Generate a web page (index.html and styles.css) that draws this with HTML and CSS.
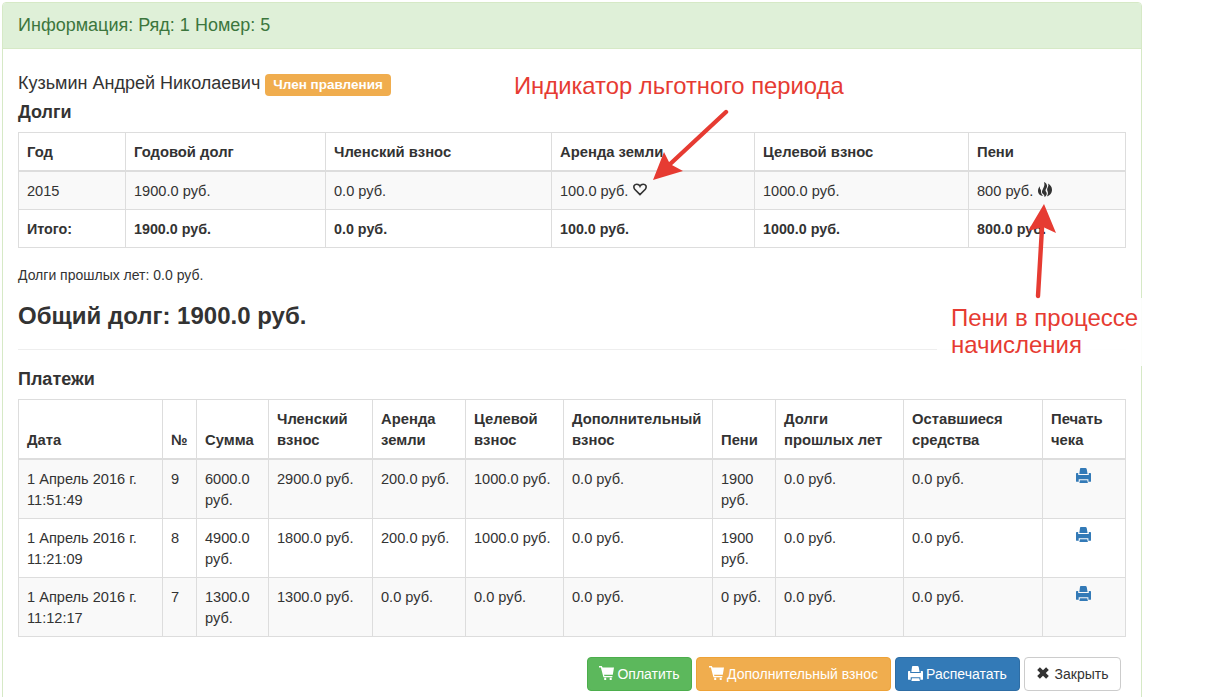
FILE: index.html
```html
<!DOCTYPE html>
<html lang="ru">
<head>
<meta charset="utf-8">
<title>Информация</title>
<link rel="stylesheet" href="styles.css">
</head>
<body>
<svg class="defs" width="0" height="0">
  <symbol id="cart" viewBox="0 0 15 14"><path d="M0 0h2.800l.8 1.500H15l-1.200 7.300H5l.4 1.100h8v1.400H4.400L1.900 1.400H0zM5.200 11.800h2V14h-2zM10.700 11.800h2V14h-2z"/></symbol>
  <symbol id="print" viewBox="0 0 15 15"><path d="M4.700 0h4.800c.6 0 1 .4 1.200 1l.9 4.900H3.300L4 1C4.100.4 4.300 0 4.700 0zM0 5.600C0 5.200.4 5 .8 5h1.400v2h10.600V5h1.400c.4 0 .8.200.8.600v7.600c0 .4-.3.600-.7.600h-1.900v-2.500H2.700v2.500H.7c-.4 0-.7-.2-.7-.6zM3.900 12.300h7.400l.6 2.700H3.400z"/></symbol>
  <symbol id="cross" viewBox="0 0 12 12"><path d="M2.900.2 6 3.200 9.100.2l2.700 2.700L8.800 6l3 3.100-2.700 2.700L6 8.800l-3.100 3L.2 9.100 3.200 6l-3-3.100z"/></symbol>
</svg>
<section class="panel">
  <header class="panel-heading">Информация: Ряд: 1 Номер: 5</header>
  <div class="panel-body">
    <h4 class="owner"><span class="owner-name">Кузьмин Андрей Николаевич</span><span class="label">Член правления</span></h4>
    <h4 class="title">Долги</h4>
    <table class="table debts">
      <colgroup><col class="w107"><col class="w200"><col class="w226"><col class="w203"><col class="w214"><col class="w157"></colgroup>
      <thead><tr><th>Год</th><th>Годовой долг</th><th>Членский взнос</th><th>Аренда земли</th><th>Целевой взнос</th><th>Пени</th></tr></thead>
      <tbody>
        <tr class="odd"><td>2015</td><td>1900.0 руб.</td><td>0.0 руб.</td><td>100.0 руб. <svg class="heart" viewBox="0 0 14 13"><path d="M7 11.600 1.700 6.200C-.2 3.600 1.400 1.200 3.800 1.200 5.400 1.200 6.500 2 7 3.200 7.500 2 8.600 1.200 10.200 1.200c2.400 0 4 2.400 2.100 5z"/></svg></td><td>1000.0 руб.</td><td>800 руб. <svg class="fire" viewBox="0 0 14 15"><path d="M6 0c3.400 1.700 3.800 4.400 2 7-.8 1.300-.6 2.100.4 3.200.9 1.900 0 3.700-2 4.800.2-1.300-.1-2-1-2.700-1.700-1.200-1.900-2.900-.7-4.800C6.100 5 6.900 2.800 6 0zM2 4.200c-.4 1.700 0 2.800 1 3.900-.2 2.500.5 4.300 2.200 6C1.600 13.700-.1 11.400 0 8.800c.1-1.900.7-3.400 2-4.600zM10 1.600c3 1.600 4.400 4.300 3.900 7.500-.4 2.500-2 4.500-5 5.400 1.100-1.800 1.300-3.400.7-5.200-.7-1.500-.6-2.600.1-3.900.8-1.200.9-2.400.3-3.800z"/></svg></td></tr>
        <tr class="total"><td>Итого:</td><td>1900.0 руб.</td><td>0.0 руб.</td><td>100.0 руб.</td><td>1000.0 руб.</td><td>800.0 руб.</td></tr>
      </tbody>
    </table>
    <p class="past">Долги прошлых лет: 0.0 руб.</p>
    <h3 class="sum">Общий долг: 1900.0 руб.</h3>
    <hr class="rule">
    <h4 class="title pays-title">Платежи</h4>
    <table class="table pays">
      <colgroup><col class="w144"><col class="w34"><col class="w72"><col class="w104"><col class="w93"><col class="w98"><col class="w149"><col class="w63"><col class="w128"><col class="w139"><col class="w83"></colgroup>
      <thead><tr><th>Дата</th><th>№</th><th>Сумма</th><th>Членский<br>взнос</th><th>Аренда<br>земли</th><th>Целевой<br>взнос</th><th>Дополнительный<br>взнос</th><th>Пени</th><th>Долги<br>прошлых лет</th><th>Оставшиеся<br>средства</th><th>Печать<br>чека</th></tr></thead>
      <tbody>
        <tr class="odd"><td>1 Апрель 2016 г.<br>11:51:49</td><td>9</td><td>6000.0<br>руб.</td><td>2900.0 руб.</td><td>200.0 руб.</td><td>1000.0 руб.</td><td>0.0 руб.</td><td>1900<br>руб.</td><td>0.0 руб.</td><td>0.0 руб.</td><td class="check"><svg class="print"><use href="#print"/></svg></td></tr>
        <tr><td>1 Апрель 2016 г.<br>11:21:09</td><td>8</td><td>4900.0<br>руб.</td><td>1800.0 руб.</td><td>200.0 руб.</td><td>1000.0 руб.</td><td>0.0 руб.</td><td>1900<br>руб.</td><td>0.0 руб.</td><td>0.0 руб.</td><td class="check"><svg class="print"><use href="#print"/></svg></td></tr>
        <tr class="odd"><td>1 Апрель 2016 г.<br>11:12:17</td><td>7</td><td>1300.0<br>руб.</td><td>1300.0 руб.</td><td>0.0 руб.</td><td>0.0 руб.</td><td>0.0 руб.</td><td>0 руб.</td><td>0.0 руб.</td><td>0.0 руб.</td><td class="check"><svg class="print"><use href="#print"/></svg></td></tr>
      </tbody>
    </table>
    <div class="actions">
      <button class="btn success"><svg class="cart"><use href="#cart"/></svg>Оплатить</button>
      <button class="btn warning"><svg class="cart"><use href="#cart"/></svg>Дополнительный взнос</button>
      <button class="btn primary"><svg class="print"><use href="#print"/></svg>Распечатать</button>
      <button class="btn default"><svg class="cross"><use href="#cross"/></svg>Закрыть</button>
    </div>
  </div>
</section>
<div class="note note-grace">Индикатор льготного периода</div>
<div class="note note-fine">Пени в процессе<br>начисления</div>
<svg class="arrows" viewBox="0 0 1207 697">
  <path class="shaft" d="M726 112 668 166M1038 296 1042 228"/>
  <path class="head" d="M653 180 664 152 670 164 683 171zM1044 204 1056 233 1043 227 1028 231z"/>
</svg>
</body>
</html>
```

FILE: styles.css
```css
* { box-sizing: border-box; }
body {
  margin: 0;
  height: 697px;
  overflow: hidden;
  position: relative;
  background: #fff;
  color: #333;
  font-family: "Liberation Sans", Arial, sans-serif;
  font-size: 15px;
  line-height: 21px;
}
.defs { position: absolute; }
.panel {
  width: 1140px;
  height: 720px;
  margin: 2px 0 0 2px;
  border: 1px solid #d6e9c6;
  border-radius: 4px;
}
.panel-heading {
  height: 46px;
  padding: 12px 15px 0;
  border-bottom: 1px solid #d6e9c6;
  border-radius: 3px 3px 0 0;
  background: #dff0d8;
  color: #3c763d;
  font-size: 18px;
}
.panel-body { padding: 22px 15px 0; }
h3, h4, p { margin: 0; }
.owner {
  display: flex;
  align-items: center;
  gap: 5px;
  height: 24px;
  font-size: 18px;
  font-weight: 400;
}
.label {
  height: 22px;
  margin-top: 3px;
  padding: 0 8px;
  border-radius: 4px;
  background: #f0ad4e;
  color: #fff;
  font-size: 13.5px;
  font-weight: 700;
  line-height: 21px;
}
.title { height: 20px; margin-top: 7px; font-size: 18px; line-height: 20px; }
.table { width: 1108px; table-layout: fixed; border-collapse: collapse; }
.table th, .table td {
  padding: 9px 8px 7px;
  border: 1px solid #ddd;
  text-align: left;
  vertical-align: top;
  white-space: nowrap;
}
.table th { border-bottom-width: 2px; vertical-align: bottom; font-size: 14.8px; }
.table td { font-size: 14.6px; }
.odd { background: #f9f9f9; }
.table .total td { font-size: 14.3px; font-weight: 700; }
.debts { margin-top: 10px; }
.debts tr { height: 38px; }
.pays { margin-top: 10px; }
.w107 { width: 107px; } .w200 { width: 200px; } .w226 { width: 226px; }
.w203 { width: 203px; } .w214 { width: 214px; } .w157 { width: 157px; }
.w144 { width: 144px; } .w34 { width: 34px; } .w72 { width: 72px; }
.w104 { width: 104px; } .w93 { width: 93px; } .w98 { width: 98px; }
.w149 { width: 149px; } .w63 { width: 63px; } .w128 { width: 128px; }
.w139 { width: 139px; } .w83 { width: 83px; }
.heart { width: 14px; height: 13px; margin-left: 1px; vertical-align: 0; fill: none; stroke: #333; stroke-width: 1.6; }
.fire { width: 14px; height: 15px; margin-left: 1px; vertical-align: -1px; fill: #333; }
.print { width: 15px; height: 15px; fill: currentColor; }
.table .check { padding: 8px 9px 7px 7px; color: #337ab7; text-align: center; }
.check .print { display: block; margin: 0 auto; }
.past { margin-top: 17px; font-size: 14px; }
.sum { height: 26px; margin-top: 17px; font-size: 24px; line-height: 26px; }
.rule { height: 1px; margin: 20px 0 0; border: 0; background: #eee; }
.pays-title { margin-top: 19px; }
.actions { display: flex; justify-content: flex-end; gap: 4px; padding: 20px 5px 0 0; }
.btn {
  display: flex;
  align-items: center;
  justify-content: center;
  gap: 3px;
  height: 34px;
  padding: 0;
  border: 1px solid;
  border-radius: 4px;
  color: #fff;
  font: 14px "Liberation Sans", Arial, sans-serif;
}
.cart { width: 15px; height: 14px; margin-top: -2px; fill: currentColor; }
.btn .print { margin-top: -2px; }
.cross { width: 12px; height: 12px; margin: -2px 3px 0 0; fill: currentColor; }
.success { width: 105px; background: #5cb85c; border-color: #4cae4c; }
.warning { width: 195px; background: #f0ad4e; border-color: #eea236; }
.primary { width: 125px; background: #337ab7; border-color: #2e6da4; }
.default { width: 97px; background: #fff; border-color: #ccc; color: #333; }
.note { position: absolute; color: #e63b32; font-size: 24px; line-height: 27px; white-space: nowrap; }
.note-grace { left: 514px; top: 72px; font-size: 23.8px; }
.note-fine { left: 937px; top: 298px; width: 209px; height: 68px; padding: 6px 0 0 14px; background: rgba(255,255,255,.9); }
.arrows { position: absolute; left: 0; top: 0; width: 1207px; height: 697px; pointer-events: none; }
.shaft { fill: none; stroke: #e63b32; stroke-width: 4.4; stroke-linecap: round; }
.head { fill: #e63b32; }
```
